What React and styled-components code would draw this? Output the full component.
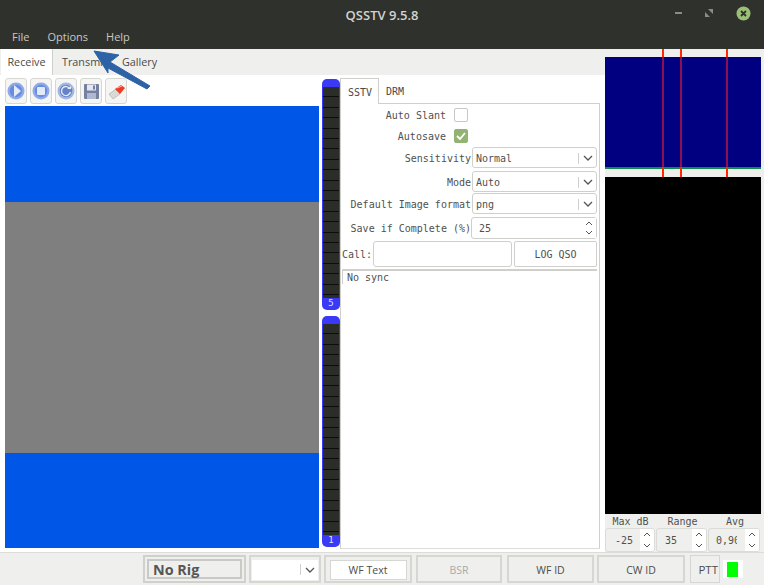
import React from "react";
import styled, { createGlobalStyle } from "styled-components";

const Global = createGlobalStyle`
  html, body { margin: 0; padding: 0; background: #eff0ed; }
  * { box-sizing: border-box; }
`;

const ui = `"Open Sans", "Noto Sans", sans-serif`;
const mono = `"DejaVu Sans Mono", "Liberation Mono", monospace`;
const line = "#cfd0cc";

const Win = styled.div`
  position: relative;
  width: 764px;
  height: 585px;
  overflow: hidden;
  display: flex;
  flex-direction: column;
  background: #eff0ed;
  font-family: ${ui};
  color: #4c4c4c;
`;
const TitleBar = styled.div`
  height: 26px;
  flex: none;
  display: grid;
  grid-template-columns: 1fr auto 1fr;
  align-items: center;
  background: #2f312d;
  color: #d3d4d0;
  font-size: 13px;
  font-weight: 600;
  padding-top: 3px;
`;
const TitleText = styled.span`
  grid-column: 2;
`;
const WinControls = styled.div`
  grid-column: 3;
  display: flex;
  justify-content: flex-end;
  align-items: center;
  gap: 23px;
  padding-right: 13px;
  margin-top: -3px;
`;
const MenuBar = styled.div`
  height: 23px;
  flex: none;
  display: flex;
  align-items: center;
  gap: 18px;
  padding: 0 0 3px 12px;
  background: #2f312d;
  color: #c8c9c5;
  font-size: 11px;
`;
const Body = styled.div`
  height: 503px;
  flex: none;
  display: flex;
`;
const LeftPane = styled.div`
  width: 605px;
  flex: none;
  display: flex;
  flex-direction: column;
`;
const TabBar = styled.div`
  height: 26px;
  flex: none;
  display: flex;
  padding-left: 1px;
`;
const MainTab = styled.div`
  width: ${(p) => p.$w}px;
  display: flex;
  align-items: center;
  justify-content: ${(p) => (p.$active ? "center" : "flex-start")};
  padding-left: ${(p) => (p.$active ? 0 : 9)}px;
  padding-bottom: 1px;
  font-size: 10.8px;
  background: ${(p) => (p.$active ? "#fff" : "transparent")};
  border-right: ${(p) => (p.$active ? `1px solid ${line}` : "none")};
  color: #4a4a4a;
`;
const WhitePanel = styled.div`
  height: 477px;
  flex: none;
  background: #fff;
  display: flex;
  padding: 3px 0 3px 5px;
`;
const ImageColumn = styled.div`
  width: 314px;
  flex: none;
  display: flex;
  flex-direction: column;
`;
const Toolbar = styled.div`
  height: 28px;
  flex: none;
  display: flex;
  align-items: flex-start;
`;
const ToolBtn = styled.div`
  width: 22px;
  height: 26px;
  margin-right: 3px;
  border: 1px solid #d6d6d3;
  border-radius: 3px;
  display: flex;
  align-items: center;
  justify-content: center;
  background: #f5f5f3;
`;
const Picture = styled.div`
  flex: 1;
  display: flex;
  flex-direction: column;
`;
const Band = styled.div`
  height: ${(p) => p.$h}px;
  flex: none;
  background: ${(p) => p.$c};
`;
const MeterColumn = styled.div`
  width: 18px;
  margin-left: 3px;
  flex: none;
  display: flex;
  flex-direction: column;
  gap: 6px;
  padding-top: 1px;
`;
const Meter = styled.div`
  height: 231px;
  flex: none;
  display: flex;
  flex-direction: column;
  background: #3a3af6;
  border-radius: 5px;
  padding: 8px 1px 0;
`;
const MeterTrack = styled.div`
  flex: 1;
  background: repeating-linear-gradient(
    to bottom,
    #2b2d29 0,
    #2b2d29 9.4px,
    #0c0c0c 9.4px,
    #0c0c0c 10.4px
  );
`;
const MeterKnob = styled.div`
  height: 12px;
  flex: none;
  color: #dfe4ff;
  font: 9px/11px ${mono};
  text-align: center;
`;
const Side = styled.div`
  width: 260px;
  flex: none;
  display: flex;
  flex-direction: column;
`;
const SubTabs = styled.div`
  height: 25px;
  flex: none;
  display: flex;
`;
const SubTab = styled.div`
  width: ${(p) => p.$w}px;
  display: flex;
  align-items: center;
  justify-content: center;
  font: 10px ${mono};
  color: #4a4a4a;
  margin-bottom: ${(p) => (p.$active ? -1 : 0)}px;
  padding: 2px 0 0 ${(p) => (p.$active ? 1 : 0)}px;
  background: #fff;
  position: relative;
  border: ${(p) => (p.$active ? `1px solid ${line}` : "none")};
  border-bottom: none;
`;
const SubPanel = styled.div`
  flex: 1;
  border: 1px solid ${line};
  border-bottom-color: #dcdcd9;
  display: flex;
  flex-direction: column;
  padding: 4px 2px 0 1px;
  font: 10px ${mono};
  color: #505050;
`;
const CheckRow = styled.div`
  height: ${(p) => p.$h}px;
  flex: none;
  display: flex;
  align-items: flex-start;
`;
const CheckLabel = styled.div`
  width: 104px;
  text-align: right;
  line-height: 15px;
`;
const Box = styled.div`
  width: 14px;
  height: 14px;
  margin-left: 8px;
  border-radius: 2px;
  border: 1px solid ${(p) => (p.$on ? "#92b372" : "#c8c8c4")};
  background: ${(p) => (p.$on ? "#92b372" : "#fff")};
  display: flex;
  align-items: center;
  justify-content: center;
`;
const FormRow = styled.div`
  height: ${(p) => p.$h}px;
  margin-bottom: ${(p) => p.$mb || 0}px;
  flex: none;
  display: flex;
  align-items: stretch;
`;
const RowLabel = styled.div`
  width: 129px;
  flex: none;
  text-align: right;
  line-height: ${(p) => p.$lh + 2}px;
`;
const Combo = styled.div`
  flex: 1;
  margin-left: 1px;
  border: 1px solid ${line};
  border-radius: 3px;
  display: flex;
  align-items: center;
  padding: 1px 0 0 3px;
`;
const ComboText = styled.span`
  flex: 1;
`;
const ComboArrow = styled.div`
  width: 18px;
  height: 11px;
  border-left: 1px solid ${line};
  display: flex;
  align-items: center;
  justify-content: center;
`;
const Spin = styled.div`
  flex: 1;
  border: 1px solid ${line};
  border-radius: 3px;
  display: flex;
  align-items: center;
  padding-left: 7px;
`;
const SpinArrows = styled.div`
  width: 15px;
  align-self: stretch;
  display: flex;
  flex-direction: column;
  justify-content: space-between;
  align-items: center;
  padding: 3px 0;
  background: #fff;
`;
const CallRow = styled.div`
  height: 26px;
  margin-top: 2px;
  flex: none;
  display: flex;
`;
const CallLabel = styled.div`
  width: 31px;
  flex: none;
  line-height: 27px;
`;
const CallInput = styled.div`
  width: 139px;
  flex: none;
  border: 1px solid ${line};
  border-radius: 3px;
`;
const LogButton = styled.div`
  flex: 1;
  margin-left: 2px;
  border: 1px solid ${line};
  border-radius: 2px;
  display: flex;
  align-items: center;
  justify-content: center;
`;
const Log = styled.div`
  height: 15px;
  margin-top: 2px;
  flex: none;
  border-top: 2px solid #cfcfcb;
  border-left: 1px solid #cfcfcb;
  padding-left: 4px;
  line-height: 14px;
`;
const RightPane = styled.div`
  width: 156px;
  flex: none;
  display: flex;
  flex-direction: column;
  background: #eff0ed;
`;
const Spectrum = styled.div`
  position: relative;
  height: 128px;
  flex: none;
  display: flex;
  flex-direction: column;
`;
const Gap = styled.div`
  height: ${(p) => p.$h}px;
  flex: none;
`;
const Navy = styled.div`
  height: 110px;
  flex: none;
  background: #000080;
`;
const GreenLine = styled.div`
  height: 2px;
  flex: none;
  background: #0d8a45;
`;
const Marker = styled.div`
  position: absolute;
  top: 0;
  bottom: 0;
  left: ${(p) => p.$x}px;
  width: 2px;
  background: linear-gradient(
    to bottom,
    #ff2a00 0,
    #ff2a00 8px,
    #8f0f50 8px,
    #8f0f50 118px,
    #ff2a00 118px
  );
`;
const Waterfall = styled.div`
  height: 337px;
  flex: none;
  background: #000;
`;
const ScaleLabels = styled.div`
  height: 14px;
  flex: none;
  display: grid;
  grid-template-columns: 51px 53px 52px;
  font: 10px/16px ${mono};
  color: #505050;
  text-align: center;
`;
const ScaleSpins = styled.div`
  height: 24px;
  flex: none;
  display: flex;
  gap: 1px;
`;
const MiniSpin = styled.div`
  width: ${(p) => p.$w}px;
  flex: none;
  display: flex;
  align-items: center;
  border: 1px solid #dbdbd7;
  border-radius: 3px;
  font: 10px ${mono};
  color: #505050;
  padding-left: ${(p) => p.$pl}px;
  overflow: hidden;
  white-space: nowrap;
`;
const MiniValue = styled.span`
  flex: 1;
  overflow: hidden;
  margin-right: ${(p) => p.$clip || 0}px;
`;
const MiniArrows = styled.div`
  width: 14px;
  flex: none;
  align-self: stretch;
  background: #fff;
  display: flex;
  flex-direction: column;
  justify-content: space-between;
  align-items: center;
  padding: 3px 0;
`;
const StatusBar = styled.div`
  height: 33px;
  flex: none;
  display: flex;
  align-items: flex-start;
  padding: 2px 0 0 143px;
  border-top: 1px solid #dcdcd9;
`;
const RigFrame = styled.div`
  width: 103px;
  height: 28px;
  flex: none;
  border: 2px solid #d0d1cd;
  padding: 2px;
`;
const RigInner = styled.div`
  height: 100%;
  border: 2px solid #c9cac6;
  display: flex;
  align-items: center;
  padding-left: 4px;
  font-weight: 700;
  font-size: 14.4px;
  color: #565656;
`;
const Frame = styled.div`
  width: ${(p) => p.$w}px;
  margin-left: ${(p) => p.$ml}px;
  height: 28px;
  flex: none;
  border: 2px solid #d6d7d3;
  display: flex;
  align-items: center;
  justify-content: center;
  padding-top: 1px;
  font-size: 10.5px;
  color: ${(p) => (p.$off ? "#a9a9a9" : "#4c4c4c")};
`;
const InnerCombo = styled.div`
  width: 66px;
  height: 20px;
  background: #fff;
  display: flex;
  justify-content: flex-end;
  align-items: center;
`;
const InnerText = styled.div`
  width: 77px;
  height: 20px;
  background: #fff;
  border: 1px solid #d6d7d3;
  display: flex;
  align-items: center;
  justify-content: center;
`;
const PttBtn = styled.div`
  width: 30px;
  height: 28px;
  margin-left: 5px;
  flex: none;
  border: 1px solid #d6d7d3;
  display: flex;
  align-items: center;
  justify-content: flex-end;
  padding-right: 1px;
  font-size: 11.5px;
`;
const Led = styled.div`
  width: 20px;
  height: 18px;
  margin: 5px 0 0 3px;
  flex: none;
  background: #fff;
  padding: 2px 5px 1px 4px;
`;
const LedFill = styled.div`
  height: 100%;
  background: #00ff00;
`;
const ArrowOverlay = styled.svg`
  position: absolute;
  left: 90px;
  top: 46px;
`;
const IconGroup = styled.svg`
  opacity: ${(p) => p.$o || 0.85};
`;

const Chevron = () => (
  <svg width="10" height="6" viewBox="0 0 10 6"><path d="M1 1l4 4 4-4" fill="none" stroke="#555" strokeWidth="1.3" /></svg>
);
const Up = () => (
  <svg width="8" height="5" viewBox="0 0 8 5"><path d="M1 4l3-3 3 3" fill="none" stroke="#555" strokeWidth="1" /></svg>
);
const Down = () => (
  <svg width="8" height="5" viewBox="0 0 8 5"><path d="M1 1l3 3 3-3" fill="none" stroke="#555" strokeWidth="1" /></svg>
);

const Disc = ({ children }) => (
  <IconGroup width="18" height="18" viewBox="0 0 18 18">
    <circle cx="9" cy="9" r="8.5" fill="#7f9ce6" />
    <circle cx="9" cy="9" r="6.2" fill="#4f7ce0" />
    {children}
  </IconGroup>
);
const PlayIcon = () => (
  <Disc><path d="M7 3l7 6-7 6z" fill="#e3eafb" /></Disc>
);
const StopIcon = () => (
  <Disc><rect x="5" y="5" width="8" height="8" rx="1" fill="#dfe7fb" /></Disc>
);
const RefreshIcon = () => (
  <IconGroup width="18" height="18" viewBox="0 0 18 18">
    <circle cx="9" cy="9" r="8.5" fill="#97addf" />
    <circle cx="9" cy="9" r="6.2" fill="#4a6fc0" />
    <path d="M13 7a4.5 4.5 0 1 0 .4 3" fill="none" stroke="#e3e9f8" strokeWidth="1.4" />
    <path d="M10 7h4V4z" fill="#e3e9f8" />
  </IconGroup>
);
const SaveIcon = () => (
  <IconGroup $o={0.75} width="17" height="17" viewBox="0 0 17 17">
    <rect x="1" y="1" width="15" height="15" rx="1" fill="#4c5a85" />
    <rect x="4" y="1.5" width="9" height="6" fill="#dfe3ee" />
    <rect x="4" y="10" width="9" height="6" fill="#9aa5c4" />
    <rect x="10" y="2.5" width="2" height="4" fill="#4c5a85" />
  </IconGroup>
);
const EraserIcon = () => (
  <svg width="19" height="17" viewBox="0 0 19 17">
    <path d="M2 11l7-5 4 5-7 5z" fill="#d9d9d6" stroke="#a8a8a4" strokeWidth="0.6" />
    <path d="M8 6l6-4 4 3-5 6z" fill="#ee3b24" />
    <path d="M10 5l5-2" stroke="#ffb4a4" strokeWidth="1" />
  </svg>
);
const CheckMark = () => (
  <svg width="10" height="8" viewBox="0 0 10 8"><path d="M1 4l3 3 5-6" fill="none" stroke="#fff" strokeWidth="1.8" /></svg>
);

const ComboField = ({ label, value, h, mb }) => (
  <FormRow $h={h} $mb={mb}>
    <RowLabel $lh={h}>{label}</RowLabel>
    <Combo>
      <ComboText>{value}</ComboText>
      <ComboArrow><Chevron /></ComboArrow>
    </Combo>
  </FormRow>
);

const ScaleSpin = ({ w, pl, value, clip }) => (
  <MiniSpin $w={w} $pl={pl}>
    <MiniValue $clip={clip}>{value}</MiniValue>
    <MiniArrows><Up /><Down /></MiniArrows>
  </MiniSpin>
);

export default function App() {
  return (
    <Win>
      <Global />
      <TitleBar>
        <TitleText>QSSTV 9.5.8</TitleText>
        <WinControls>
          <svg width="7" height="3" viewBox="0 0 7 3"><rect width="7" height="2" fill="#8b8c88" /></svg>
          <svg width="8" height="8" viewBox="0 0 8 8"><path d="M0 3v5h5zM8 5V0H3z" fill="#8b8c88" /></svg>
          <svg width="15" height="15" viewBox="0 0 15 15">
            <circle cx="7.5" cy="7.5" r="7" fill="#9bbf74" />
            <path d="M5 5l5 5M10 5l-5 5" stroke="#2f312d" strokeWidth="1.8" />
          </svg>
        </WinControls>
      </TitleBar>
      <MenuBar>
        <span>File</span>
        <span>Options</span>
        <span>Help</span>
      </MenuBar>
      <Body>
        <LeftPane>
          <TabBar>
            <MainTab $w={52} $active>Receive</MainTab>
            <MainTab $w={60}>Transmit</MainTab>
            <MainTab $w={60}>Gallery</MainTab>
          </TabBar>
          <WhitePanel>
            <ImageColumn>
              <Toolbar>
                <ToolBtn><PlayIcon /></ToolBtn>
                <ToolBtn><StopIcon /></ToolBtn>
                <ToolBtn><RefreshIcon /></ToolBtn>
                <ToolBtn><SaveIcon /></ToolBtn>
                <ToolBtn><EraserIcon /></ToolBtn>
              </Toolbar>
              <Picture>
                <Band $h={96} $c="#0057e7" />
                <Band $h={251} $c="#7f7f7f" />
                <Band $h={95} $c="#0057e7" />
              </Picture>
            </ImageColumn>
            <MeterColumn>
              <Meter>
                <MeterTrack />
                <MeterKnob>5</MeterKnob>
              </Meter>
              <Meter>
                <MeterTrack />
                <MeterKnob>1</MeterKnob>
              </Meter>
            </MeterColumn>
            <Side>
              <SubTabs>
                <SubTab $w={39} $active>SSTV</SubTab>
                <SubTab $w={32}>DRM</SubTab>
              </SubTabs>
              <SubPanel>
                <CheckRow $h={21}>
                  <CheckLabel>Auto Slant</CheckLabel>
                  <Box />
                </CheckRow>
                <CheckRow $h={18}>
                  <CheckLabel>Autosave</CheckLabel>
                  <Box $on><CheckMark /></Box>
                </CheckRow>
                <ComboField label="Sensitivity" value="Normal" h={21} mb={3} />
                <ComboField label="Mode" value="Auto" h={21} mb={1} />
                <ComboField label="Default Image format" value="png" h={21} mb={3} />
                <FormRow $h={22}>
                  <RowLabel $lh={22}>Save if Complete (%)</RowLabel>
                  <Spin>
                    <ComboText>25</ComboText>
                    <SpinArrows><Up /><Down /></SpinArrows>
                  </Spin>
                </FormRow>
                <CallRow>
                  <CallLabel>Call:</CallLabel>
                  <CallInput />
                  <LogButton>LOG QSO</LogButton>
                </CallRow>
                <Log>No sync</Log>
              </SubPanel>
            </Side>
          </WhitePanel>
        </LeftPane>
        <RightPane>
          <Spectrum>
            <Gap $h={8} />
            <Navy />
            <GreenLine />
            <Gap $h={8} />
            <Marker $x={57} />
            <Marker $x={75} />
            <Marker $x={121} />
          </Spectrum>
          <Waterfall />
          <ScaleLabels>
            <span>Max dB</span>
            <span>Range</span>
            <span>Avg</span>
          </ScaleLabels>
          <ScaleSpins>
            <ScaleSpin w={50} pl={9} value="-25" />
            <ScaleSpin w={51} pl={8} value="35" />
            <ScaleSpin w={52} pl={7} value="0,90" clip={8} />
          </ScaleSpins>
        </RightPane>
      </Body>
      <StatusBar>
        <RigFrame><RigInner>No Rig</RigInner></RigFrame>
        <Frame $w={72} $ml={3}>
          <InnerCombo><ComboArrow><Chevron /></ComboArrow></InnerCombo>
        </Frame>
        <Frame $w={88} $ml={3}><InnerText>WF Text</InnerText></Frame>
        <Frame $w={86} $ml={4} $off>BSR</Frame>
        <Frame $w={87} $ml={5}>WF ID</Frame>
        <Frame $w={88} $ml={3}>CW ID</Frame>
        <PttBtn>PTT</PttBtn>
        <Led><LedFill /></Led>
      </StatusBar>
      <ArrowOverlay width="64" height="46" viewBox="0 0 64 46">
        <path d="M4 5L29 9L20 16L60 40L57 43L18 22L18 27Z" fill="#2e62a6" stroke="#2e62a6" strokeWidth="1" strokeLinejoin="round" />
      </ArrowOverlay>
    </Win>
  );
}
